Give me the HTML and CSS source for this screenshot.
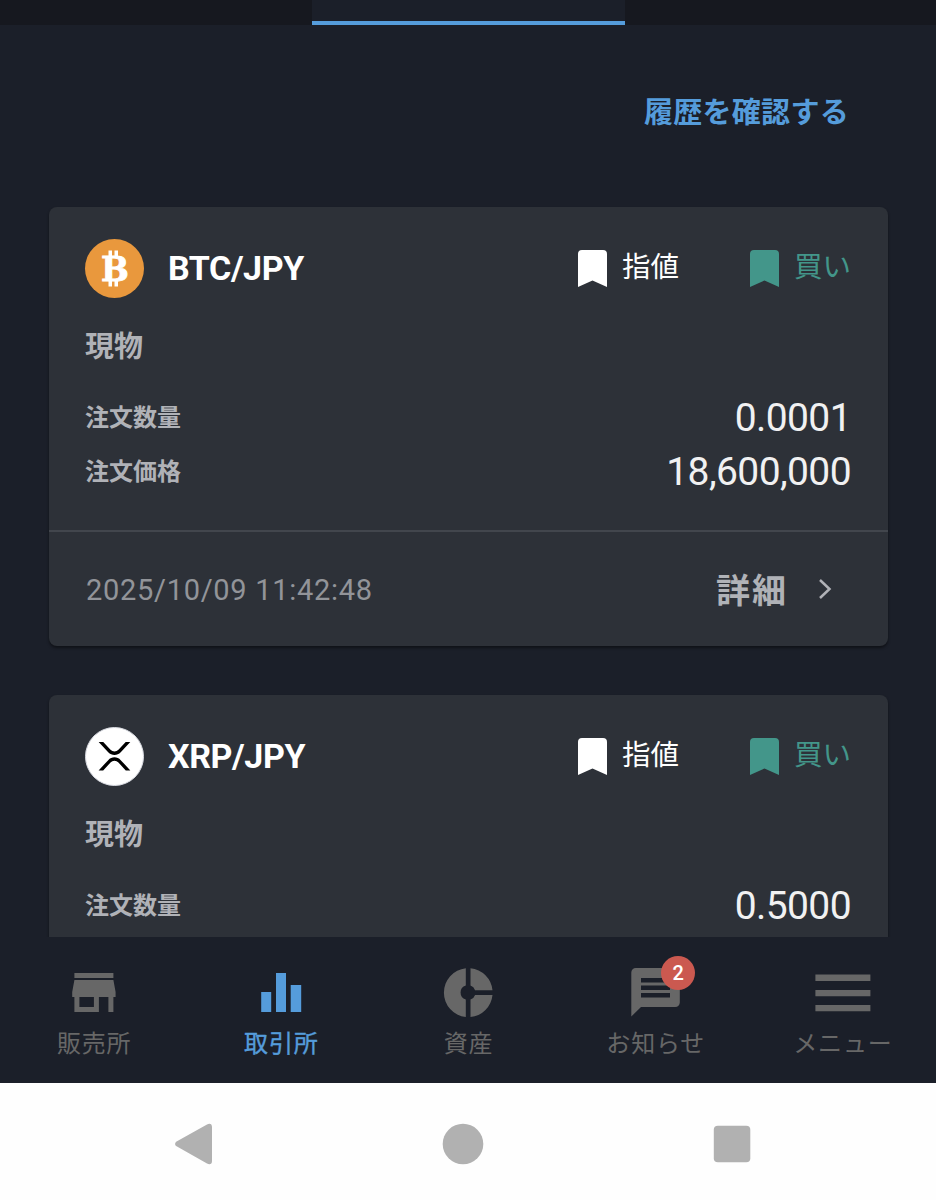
FILE: index.html
```html
<!DOCTYPE html>
<html lang="ja">
<head>
  <meta charset="UTF-8">
  <meta name="viewport" content="width=device-width, initial-scale=1.0">
  <title>取引所</title>
  <link rel="stylesheet" href="styles.css">
</head>
<body>
<main class="content">
  <div class="tabs">
    <div class="tab"></div>
    <div class="tab active"></div>
    <div class="tab"></div>
  </div>

  <div class="history">
    <a class="history-link">履歴を確認する</a>
  </div>

  <div class="orders">
    <section class="card">
      <div class="card-body">
        <div class="card-header">
          <svg class="coin" viewBox="0 0 59 59">
            <circle cx="29.5" cy="29.5" r="29.5" fill="#e9983d"/>
            <text class="coin-letter" x="16" y="41.5">B</text>
            <path d="M23.500 11.500h3.500V18h-3.500zM29.500 11.500H33V18h-3.500zM23.500 41h3.500v6.500h-3.500zM29.500 41H33v6.500h-3.500z" fill="#fff"/>
          </svg>
          <h2 class="pair">BTC/JPY</h2>
          <div class="tag">
            <svg class="bookmark" viewBox="0 0 29 37"><path d="M4 0h21a4 4 0 0 1 4 4v33l-14.500-6.500L0 37V4a4 4 0 0 1 4-4z"/></svg>
            <span>指値</span>
          </div>
          <div class="tag buy">
            <svg class="bookmark" viewBox="0 0 29 37"><path d="M4 0h21a4 4 0 0 1 4 4v33l-14.500-6.500L0 37V4a4 4 0 0 1 4-4z"/></svg>
            <span>買い</span>
          </div>
        </div>
        <div class="kind">現物</div>
        <div class="row">
          <span class="label">注文数量</span>
          <span class="value">0.0001</span>
        </div>
        <div class="row">
          <span class="label">注文価格</span>
          <span class="value">18,600,000</span>
        </div>
      </div>
      <div class="card-footer">
        <span class="date">2025/10/09 11:42:48</span>
        <span class="detail">詳細</span>
        <svg class="chevron" viewBox="0 0 14 22"><path d="M2 2l9.500 9L2 20"/></svg>
      </div>
    </section>

    <section class="card">
      <div class="card-body">
        <div class="card-header">
          <svg class="coin" viewBox="0 0 59 59">
            <circle cx="29.5" cy="29.5" r="29" fill="#fff" stroke="#d9dbe2"/>
            <g transform="translate(13.600 15) scale(.062 .067)">
              <path d="M437 0h74L357 152.500c-55.800 55.200-146.200 55.200-202 0L1 0h74l117 115.800a91 91 0 0 0 128 0z"/>
              <path d="M74 424H0l155-153.400c55.800-55.200 146.200-55.200 202 0L512 424h-74L320 307.200a91 91 0 0 0-128 0z"/>
            </g>
          </svg>
          <h2 class="pair">XRP/JPY</h2>
          <div class="tag">
            <svg class="bookmark" viewBox="0 0 29 37"><path d="M4 0h21a4 4 0 0 1 4 4v33l-14.500-6.500L0 37V4a4 4 0 0 1 4-4z"/></svg>
            <span>指値</span>
          </div>
          <div class="tag buy">
            <svg class="bookmark" viewBox="0 0 29 37"><path d="M4 0h21a4 4 0 0 1 4 4v33l-14.500-6.500L0 37V4a4 4 0 0 1 4-4z"/></svg>
            <span>買い</span>
          </div>
        </div>
        <div class="kind">現物</div>
        <div class="row">
          <span class="label">注文数量</span>
          <span class="value">0.5000</span>
        </div>
      </div>
    </section>
  </div>
</main>

<nav class="navbar">
  <a class="nav-item">
    <svg class="nav-icon" viewBox="0 0 56 56"><path fill-rule="evenodd" d="M8.400 8h39v5h-39zM8.400 15h39l2.200 12v5h-2.200v15h-5V32h-9.500v15H8.400V32H6.200v-5zM13.400 32v10h14.500V32z"/></svg>
    <span class="nav-label">販売所</span>
  </a>
  <a class="nav-item current">
    <svg class="nav-icon" viewBox="0 0 56 56"><path d="M8.200 27h10v20h-10zM23 8h10v39H23zM37.700 20h10.500v27H37.700z"/></svg>
    <span class="nav-label">取引所</span>
  </a>
  <a class="nav-item">
    <svg class="nav-icon" viewBox="0 0 56 56"><path d="M25.800 3.200v17.400a7.300 7.300 0 0 0 0 14v17.500a24.600 24.600 0 0 1 0-48.900zM30.500 3.200a24.600 24.600 0 0 1 22 22H35.100a7.300 7.300 0 0 0-4.600-4.600zM35.100 30h17.400a24.600 24.600 0 0 1-22 22.100V34.600a7.300 7.300 0 0 0 4.600-4.600z"/></svg>
    <span class="nav-label">資産</span>
  </a>
  <a class="nav-item">
    <div class="icon-wrap">
      <svg class="nav-icon" viewBox="0 0 56 56"><path fill-rule="evenodd" d="M8.800 3h39.500a4.500 4.500 0 0 1 4.500 4.500v30a4.500 4.500 0 0 1-4.500 4.500H14l-9.700 9.500v-44A4.500 4.500 0 0 1 8.800 3zM14 13v4.500h29V13zM14 20.400V25h29v-4.600zM14 28v4.500h29V28z"/></svg>
      <span class="badge">2</span>
    </div>
    <span class="nav-label">お知らせ</span>
  </a>
  <a class="nav-item">
    <svg class="nav-icon" viewBox="0 0 56 56"><path d="M1.400 9.400h55v6.500h-55zM1.400 24.900h55v6.300h-55zM1.400 40h55v6.300h-55z"/></svg>
    <span class="nav-label">メニュー</span>
  </a>
</nav>

<div class="system-bar">
  <svg class="system-icon" viewBox="0 0 42 42"><path d="M4 18.200L34 1.400c3-1.600 5-.4 5 2.600v34c0 3-2 4.200-5 2.600L4 23.600c-2.500-1.400-2.500-4 0-5.400z"/></svg>
  <svg class="system-icon" viewBox="0 0 42 42"><circle cx="21" cy="21" r="20.300"/></svg>
  <svg class="system-icon" viewBox="0 0 42 42"><rect x="2.800" y="2.800" width="36.500" height="36.500" rx="4"/></svg>
</div>
</body>
</html>
```
FILE: styles.css
```css
* {
  box-sizing: border-box;
}

body {
  margin: 0;
  height: 1200px;
  display: flex;
  flex-direction: column;
  overflow: hidden;
  background-color: #1b1f29;
  color: #fff;
  font-family: Roboto, "Noto Sans CJK JP", sans-serif;
}

svg {
  display: block;
  overflow: visible;
}

.content {
  height: 937px;
  overflow: hidden;
}

.tabs {
  display: flex;
  height: 25px;
}

.tab {
  flex: 1;
  background-color: #16181f;
}

.tab.active {
  flex: 0 0 313px;
  background-color: #1b1f29;
  border-bottom: 4px solid #559cdb;
}

.history {
  display: flex;
  justify-content: flex-end;
  padding: 68px 87px 0 0;
  height: 182px;
}

.history-link {
  color: #559cdb;
  font-size: 29px;
  font-weight: 700;
  line-height: 40px;
  letter-spacing: 0.3px;
}

.orders {
  display: flex;
  flex-direction: column;
  gap: 49px;
  padding: 0 48px 0 49px;
}

.card {
  background-color: #2d3138;
  border-radius: 8px;
  box-shadow: 0 2px 3px rgba(0, 0, 0, 0.45);
}

.card-body {
  padding: 31px 37px 31px 36px;
}

.card-header {
  display: flex;
  align-items: center;
  height: 60px;
}

.coin {
  width: 59px;
  height: 59px;
}

.coin-letter {
  fill: #fff;
  stroke: #fff;
  stroke-width: 0.8;
  font-family: "DejaVu Serif", serif;
  font-size: 33px;
  font-weight: bold;
}

.pair {
  flex: 1;
  margin: 0 0 0 24px;
  font-size: 34px;
  font-weight: 700;
  line-height: 40px;
  letter-spacing: -0.4px;
}

.tag {
  display: flex;
  align-items: center;
  gap: 15px;
  font-size: 28.500px;
  line-height: 40px;
}

.tag span {
  padding-bottom: 1px;
}

.tag.buy {
  margin-left: 71px;
  color: #43968a;
}

.bookmark {
  width: 29px;
  height: 37px;
  fill: currentColor;
}

.kind {
  margin: 29px 0 24px;
  color: #b0b2b7;
  font-size: 29px;
  font-weight: 700;
  line-height: 40px;
}

.row {
  display: flex;
  align-items: center;
  justify-content: space-between;
  height: 54px;
}

.label {
  padding-bottom: 6px;
  color: #b0b2b7;
  font-size: 24px;
  font-weight: 700;
}

.value {
  color: #f1f1f2;
  font-size: 39px;
  letter-spacing: -0.6px;
}

.card-footer {
  display: flex;
  align-items: center;
  height: 116px;
  padding: 0 56px 0 37px;
  border-top: 2px solid #42464d;
}

.date {
  flex: 1;
  padding-top: 1px;
  color: #929499;
  font-size: 29px;
  letter-spacing: 0.7px;
}

.detail {
  padding-bottom: 2px;
  color: #b0b2b7;
  font-size: 34px;
  font-weight: 700;
  letter-spacing: 2px;
}

.chevron {
  width: 14px;
  height: 22px;
  margin-left: 30px;
  fill: none;
  stroke: #b0b2b7;
  stroke-width: 2.500;
}

.navbar {
  display: flex;
  height: 146px;
  padding-top: 28px;
}

.nav-item {
  flex: 1;
  display: flex;
  flex-direction: column;
  align-items: center;
  gap: 6px;
  color: #676767;
  font-size: 24px;
  line-height: 34px;
  letter-spacing: 0.8px;
}

.nav-label {
  padding-left: 1px;
}

.nav-item.current {
  color: #559cdb;
  -webkit-text-stroke: 0.4px #559cdb;
}

.nav-icon {
  width: 56px;
  height: 56px;
  fill: currentColor;
}

.icon-wrap {
  position: relative;
}

.badge {
  position: absolute;
  top: -9px;
  right: -12px;
  width: 34px;
  height: 34px;
  border-radius: 50%;
  background-color: #cb5950;
  color: #fff;
  font-size: 20px;
  font-weight: 500;
  letter-spacing: 0;
  text-align: center;
}

.system-bar {
  display: flex;
  gap: 227px;
  height: 117px;
  padding: 40px 0 0 173px;
  background-color: #fefefe;
}

.system-icon {
  width: 42px;
  height: 42px;
  fill: #b1b1b1;
}
```
